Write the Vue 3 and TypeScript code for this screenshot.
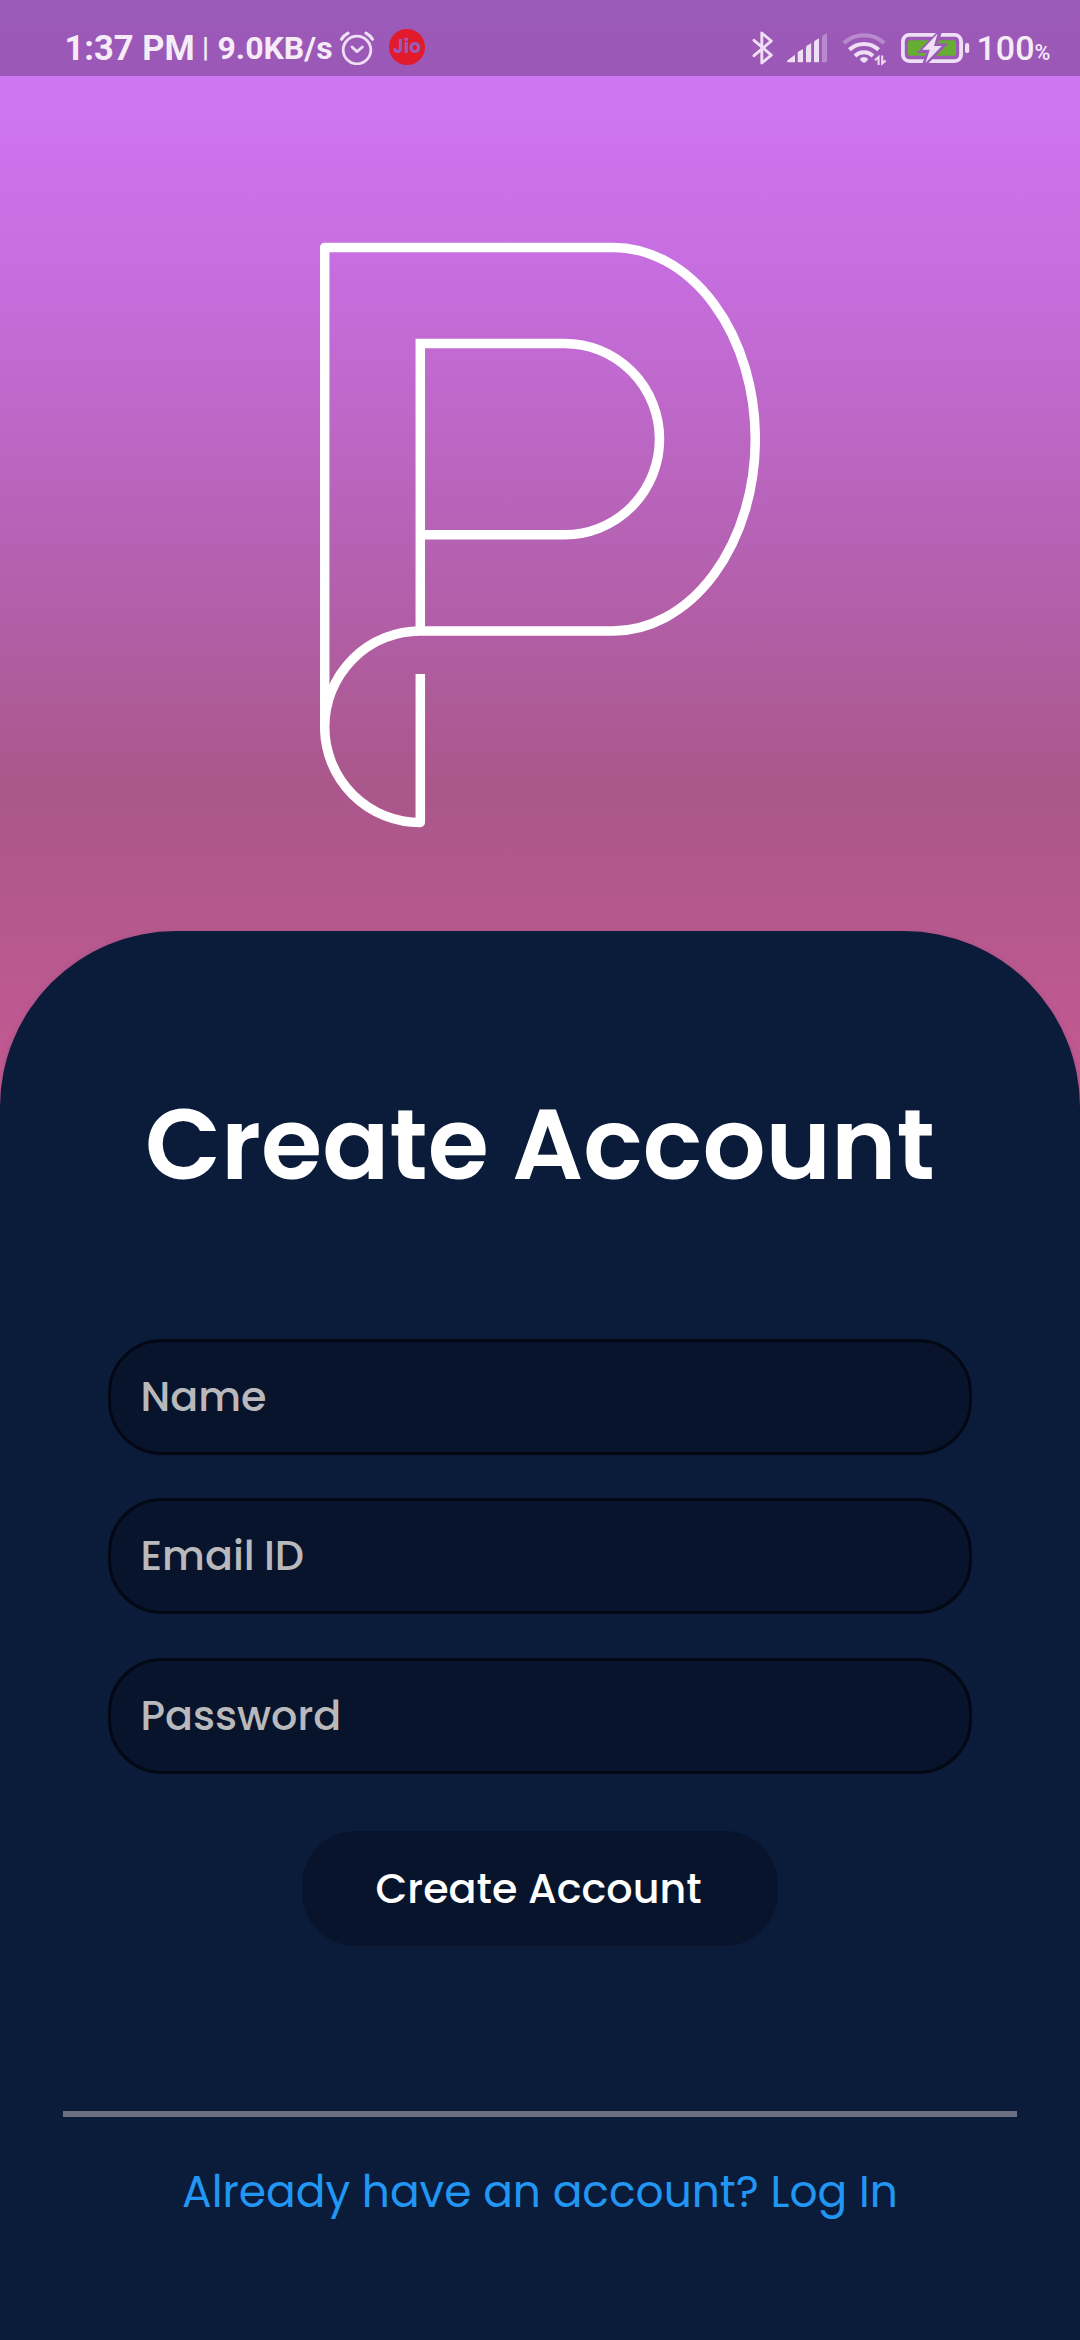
<script setup lang="ts">
interface Field {
  id: string
  label: string
}

const fields: Field[] = [
  { id: 'name', label: 'Name' },
  { id: 'email', label: 'Email ID' },
  { id: 'password', label: 'Password' },
]
</script>

<template>
  <main class="screen">
    <header class="status">
      <span class="clock">1:37 PM</span>
      <span class="bar">|</span>
      <span class="speed">9.0KB/s</span>
      <svg class="alarm" width="34" height="34" viewBox="0 0 34 34" fill="none" stroke="#eedff4" stroke-linecap="round" stroke-linejoin="round">
        <circle cx="17" cy="19" r="13.8" stroke-width="2.8" />
        <path d="M1.6 8.2Q4 4.4 8 2.2M26 2.2Q30 4.4 32.4 8.2" stroke-width="3.2" />
        <path d="M12 16l5 4.6 5.4-4.6" stroke-width="2.8" />
      </svg>
      <span class="jio">Jio</span>

      <div class="right">
        <svg class="bluetooth" width="22" height="34" viewBox="0 0 22 34" fill="none" stroke="#eedff4" stroke-width="2.9" stroke-linejoin="round" stroke-linecap="round">
          <path d="M2 9.3L19.3 24.2 9.8 32V2L19.3 10 2 24.7" />
        </svg>
        <svg class="signal" width="41" height="30" viewBox="0 0 41 30" fill="#eedff4">
          <path d="M8 21.7V29.3H.8Q-.4 29 .4 27.6Z" />
          <path d="M10.7 20.3Q10.7 19 12 18.2L16 16V28.5Q16 29.3 15.2 29.3H11.5Q10.7 29.3 10.7 28.5Z" />
          <path d="M19 14.6Q19 13.3 20.2 12.5L24.2 10.3V28.5Q24.2 29.3 23.4 29.3H19.8Q19 29.3 19 28.5Z" />
          <path d="M27 9.6Q27 8.3 28.2 7.5L32 5.3V28.5Q32 29.3 31.2 29.3H27.8Q27 29.3 27 28.5Z" />
          <path opacity=".36" d="M35 4.3Q35 3 36.2 2.2L40 0V28.5Q40 29.3 39.2 29.3H35.8Q35 29.3 35 28.5Z" />
        </svg>
        <svg class="wifi" width="45" height="36" viewBox="0 0 45 36" fill="none" stroke="#eedff4" stroke-width="4">
          <path opacity=".36" d="M1.9 13A30 30 0 0 1 42.1 13" />
          <path d="M7.4 19.8A21 21 0 0 1 36.6 19.8" />
          <path d="M13 26A12.9 12.9 0 0 1 31 26" />
          <path d="M17.8 28.8Q22 25.4 26.2 28.8Q25.4 32 22 33Q18.6 32 17.8 28.8Z" fill="#eedff4" stroke="none" />
          <path d="M36.6 35V27L33 30.2M40.2 25.5V33.5L43.6 30.4" stroke-width="2" />
        </svg>
        <svg class="battery" width="69" height="30" viewBox="0 0 69 30">
          <rect x="1.9" y="1.9" width="58.2" height="26.2" rx="6.4" fill="none" stroke="#eedff4" stroke-width="3.8" />
          <rect x="6.8" y="7.2" width="48.2" height="15.6" rx="2.6" fill="#66ad33" />
          <rect x="64" y="10" width="4.2" height="10" rx="1.8" fill="#eedff4" />
          <path d="M35 0L15.6 20H25.4L21.6 30H27.6L47.4 10.6H37L40.6 0Z" fill="#9c5ab8" />
          <path d="M36.6.4L21.3 16.8H28.8L24.4 30 40.8 13H33Z" fill="#eedff4" />
        </svg>
        <span class="level">100<small>%</small></span>
      </div>
    </header>

    <section class="hero">
      <svg class="logo" width="440" height="590" viewBox="320 241.5 440 590" fill="none" stroke="#fff" stroke-width="9.5">
        <path
          stroke-linejoin="round"
          d="M420.3 673.5V822A95.6 95.5 0 0 1 324.7 726.5V246.9H613A142.3 191.75 0 0 1 755.3 438.65A142.3 191.75 0 0 1 613 630.4H420.3A95.6 96.1 0 0 0 324.7 726.5"
        />
        <path d="M420.3 630V342.9H564.5A95 95.7 0 0 1 659.5 438.6A95 95.7 0 0 1 564.5 534.3H420.3" />
      </svg>
    </section>

    <section class="panel">
      <h1>Create Account</h1>
      <form class="form" @submit.prevent>
        <div v-for="f in fields" :key="f.id" class="field">
          <span>{{ f.label }}</span>
        </div>
        <button type="submit">Create Account</button>
      </form>
      <hr />
      <a class="login">Already have an account? Log In</a>
    </section>
  </main>
</template>

<style>
body {
  margin: 0;
  background: #0b1c3b;
}
</style>

<style scoped>
.screen {
  width: 1080px;
  height: 2340px;
  overflow: hidden;
  display: flex;
  flex-direction: column;
  font-family: Poppins, Inter, sans-serif;
  background: linear-gradient(#d078f7 0, #cf76f4 76px, #c76ee0 260px, #b662b4 540px, #aa578b 785px, #c35a92 1080px);
}

.status {
  box-sizing: border-box;
  flex: none;
  height: 76px;
  padding: 20px 0 0 64.5px;
  display: flex;
  align-items: center;
  background: rgba(0, 0, 0, 0.25);
  color: #f5ecf8;
  font-family: Roboto, sans-serif;
  font-weight: 700;
  font-size: 34.5px;
  line-height: 54px;
  white-space: nowrap;
}

.clock {
  width: 137.5px;
}

.bar {
  width: 15.5px;
  font-size: 28px;
  font-weight: 700;
}

.speed {
  width: 122.5px;
  font-size: 32px;
}

.alarm {
  flex: none;
}

.jio {
  flex: none;
  width: 36px;
  height: 36px;
  margin: 0 0 2px 15px;
  border-radius: 50%;
  background: #e11b2b;
  color: #9c5ab8;
  font: 700 18.5px/36px Poppins, Inter, sans-serif;
  text-align: center;
}

.right {
  margin-left: auto;
  width: 328px;
  display: flex;
  align-items: center;
}

.right svg {
  flex: none;
}

.signal {
  margin-left: 13px;
}

.wifi {
  margin-left: 14px;
}

.battery {
  margin-left: 14px;
}

.level {
  margin-left: 6.5px;
  font-size: 34px;
  font-weight: 500;
}

.level small {
  font-size: 21.5px;
  line-height: 0;
}

.hero {
  flex: none;
  height: 855px;
  display: flex;
  justify-content: center;
}

.logo {
  margin-top: 165.5px;
}

.panel {
  flex: 1;
  display: flex;
  flex-direction: column;
  align-items: center;
  border-radius: 176px 176px 0 0;
  background: #0b1c3b;
  box-shadow: 0 4px 9px rgba(50, 30, 60, 0.22);
}

h1 {
  margin: 154px 0 0;
  font-size: 99px;
  line-height: 120px;
  font-weight: 600;
  white-space: nowrap;
  color: #fff;
}

.form {
  width: 864px;
  margin-top: 134px;
  display: flex;
  flex-direction: column;
  align-items: center;
  gap: 43.3px;
}

.field {
  box-sizing: border-box;
  width: 100%;
  height: 116px;
  padding: 0 0 1px 29.5px;
  border: 3px solid #030814;
  border-radius: 54px;
  background: #07142c;
  display: flex;
  align-items: center;
  font-size: 41.25px;
  font-weight: 500;
  word-spacing: -1.5px;
  color: #b9b9bc;
}

button {
  width: 476px;
  height: 115px;
  margin-top: 14px;
  padding: 0 3px 0 0;
  border: 0;
  border-radius: 54px;
  background: #07142c;
  color: #fff;
  font: inherit;
  font-size: 41.25px;
  font-weight: 500;
}

hr {
  width: 954px;
  height: 6px;
  margin: 165px 0 0;
  border: 0;
  background: #6b6f80;
}

.login {
  margin-top: 45px;
  font-size: 43.9px;
  line-height: 60px;
  white-space: nowrap;
  color: #2196f3;
}
</style>
